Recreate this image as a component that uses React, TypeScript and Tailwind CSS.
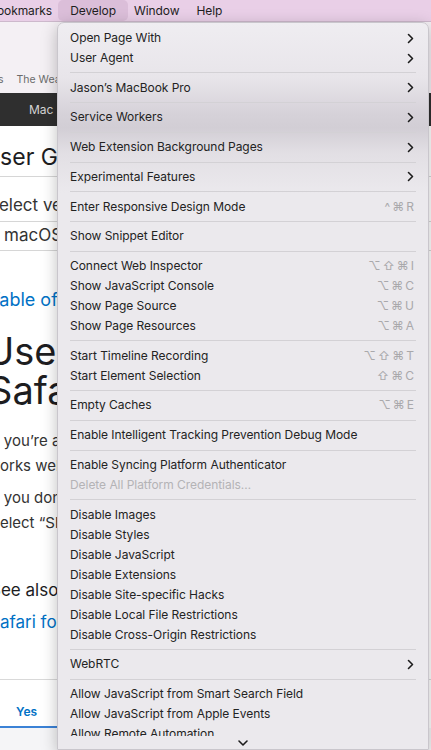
import React from "react";

type Item =
  | { kind: "sep" }
  | { kind: "item"; label: string; shortcut?: string; sub?: boolean; disabled?: boolean };

const items: Item[] = [
  { kind: "item", label: "Open Page With", sub: true },
  { kind: "item", label: "User Agent", sub: true },
  { kind: "sep" },
  { kind: "item", label: "Jason’s MacBook Pro", sub: true },
  { kind: "sep" },
  { kind: "item", label: "Service Workers", sub: true },
  { kind: "sep" },
  { kind: "item", label: "Web Extension Background Pages", sub: true },
  { kind: "sep" },
  { kind: "item", label: "Experimental Features", sub: true },
  { kind: "sep" },
  { kind: "item", label: "Enter Responsive Design Mode", shortcut: "^⌘R" },
  { kind: "sep" },
  { kind: "item", label: "Show Snippet Editor" },
  { kind: "sep" },
  { kind: "item", label: "Connect Web Inspector", shortcut: "⌥⇧⌘I" },
  { kind: "item", label: "Show JavaScript Console", shortcut: "⌥⌘C" },
  { kind: "item", label: "Show Page Source", shortcut: "⌥⌘U" },
  { kind: "item", label: "Show Page Resources", shortcut: "⌥⌘A" },
  { kind: "sep" },
  { kind: "item", label: "Start Timeline Recording", shortcut: "⌥⇧⌘T" },
  { kind: "item", label: "Start Element Selection", shortcut: "⇧⌘C" },
  { kind: "sep" },
  { kind: "item", label: "Empty Caches", shortcut: "⌥⌘E" },
  { kind: "sep" },
  { kind: "item", label: "Enable Intelligent Tracking Prevention Debug Mode" },
  { kind: "sep" },
  { kind: "item", label: "Enable Syncing Platform Authenticator" },
  { kind: "item", label: "Delete All Platform Credentials…", disabled: true },
  { kind: "sep" },
  { kind: "item", label: "Disable Images" },
  { kind: "item", label: "Disable Styles" },
  { kind: "item", label: "Disable JavaScript" },
  { kind: "item", label: "Disable Extensions" },
  { kind: "item", label: "Disable Site-specific Hacks" },
  { kind: "item", label: "Disable Local File Restrictions" },
  { kind: "item", label: "Disable Cross-Origin Restrictions" },
  { kind: "sep" },
  { kind: "item", label: "WebRTC", sub: true },
  { kind: "sep" },
  { kind: "item", label: "Allow JavaScript from Smart Search Field" },
  { kind: "item", label: "Allow JavaScript from Apple Events" },
  { kind: "item", label: "Allow Remote Automation" },
  { kind: "item", label: "Allow Unsigned Extensions" },
];

function Chevron() {
  return (
    <svg width="7" height="11" viewBox="0 0 7 11" fill="none">
      <path d="M1.5 1.5l4 4-4 4" stroke="#1c1c1c" strokeWidth="1.6" strokeLinecap="round" strokeLinejoin="round" />
    </svg>
  );
}

function BackgroundPage() {
  return (
    <div className="flex flex-col w-full font-['Inter',sans-serif]">
      {/* toolbar / favorites */}
      <div className="h-[71px] bg-[#f4f0f4] flex items-end pb-[5px] text-[10.5px] text-[#6b6b6b] whitespace-nowrap">
        <span className="-ml-[2px]">s</span>
        <span className="ml-[13px]">The Weather Channel</span>
      </div>
      {/* dark site nav */}
      <div className="h-[33px] bg-[#2f2f2f] flex items-center pl-[29px] text-[12px] text-[#d4d4d4]">
        Mac
      </div>
      <div className="bg-white flex flex-col text-[#1d1d1f] whitespace-nowrap">
        <div className="h-[51px] flex items-center pt-[12px] text-[23px] -ml-[17px] border-b border-[#d6d6d6]">User Guide</div>
        <div className="h-[45px] flex items-center pt-[14px] text-[17px] text-[#333] -ml-[12px] border-b border-[#d6d6d6]">Select version</div>
        <div className="h-[29px] flex items-center text-[17px] text-[#333] pl-[4px] border-b border-[#d6d6d6]">macOS</div>
        <div className="h-[93px] flex items-center pt-[4px] text-[18px] text-[#0071c5] -ml-[11px]">Table of Contents</div>
        <div className="flex flex-col text-[38px] leading-[39px] -ml-[14px] mt-[-12px]">
          <span>Use</span>
          <span className="ml-[2px]">Safari</span>
        </div>
        <div className="flex flex-col text-[15px] leading-[25px] text-[#333] mt-[18px]">
          <span className="-ml-[10px]">If you’re a</span>
          <span className="-ml-[12px]">works well</span>
        </div>
        <div className="flex flex-col text-[15px] leading-[25px] text-[#333] mt-[7px]">
          <span className="-ml-[10px]">If you don</span>
          <span className="-ml-[8px]">select “Show</span>
        </div>
        <div className="text-[17px] mt-[44px] -ml-[10px] leading-[22px]">See also</div>
        <div className="text-[17px] text-[#0071c5] mt-[10px] -ml-[11px] leading-[22px]">Safari for Mac</div>
        <div className="mt-[46px] border-t border-[#d9d9d9] h-[47px] pt-[25px]">
          <span className="block pl-[16px] text-[12px] leading-[14px] font-semibold text-[#0071c5]">Yes</span>
        </div>
        <div className="h-[2px] bg-[#3b82d6] w-[57px]" />
        <div className="h-[30px] bg-[#f5f5f7]" />
      </div>
    </div>
  );
}

function MenuBar() {
  return (
    <div className="h-[22px] bg-[#e9cfe7] border-b border-[#cdb9cc] flex items-center text-[12px] tracking-[-0.1px] text-[#1e1e1e] font-['Inter',sans-serif] whitespace-nowrap">
      <span className="-ml-[3px]">ookmarks</span>
      <span className="ml-[6px] h-[21px] w-[70px] flex items-center justify-center rounded-[5px] bg-[#dbbed9]">Develop</span>
      <span className="ml-[6px]">Window</span>
      <span className="ml-[17px]">Help</span>
    </div>
  );
}

function DevelopMenu() {
  return (
    <div className="absolute left-[57px] top-[22px] w-[372px] h-[728px] overflow-hidden rounded-t-[7px] border border-[#c9c6cc] shadow-[0_4px_16px_rgba(0,0,0,0.25)] bg-[linear-gradient(to_bottom,#efedf1_0px,#e8e5ea_55px,#d6d2d9_90px,#d2ced5_105px,#e2dfe4_130px,#ebe9ed_170px,#ebe9ed_100%)] font-['Inter',sans-serif] text-[12px] tracking-[-0.05px] text-[#232323]">
      <div className="flex flex-col pt-[5px]">
        {items.map((it, i) =>
          it.kind === "sep" ? (
            <div key={i} className="h-[9.72px] flex items-center px-[12px]">
              <div className="h-px w-full bg-[#d3d1d5]" />
            </div>
          ) : (
            <div key={i} className="h-[20px] flex items-center justify-between pl-[12px] pr-[14px] whitespace-nowrap">
              <span className={it.disabled ? "text-[#b4b3b6]" : ""}>{it.label}</span>
              {it.sub && <Chevron />}
              {it.shortcut && (
                <span className="text-[12px] tracking-[2px] text-[#a9a8ab] -mr-[2px]">{it.shortcut}</span>
              )}
            </div>
          )
        )}
      </div>
      <div className="absolute left-0 right-0 bottom-0 h-[13px] bg-[#ebe9ed] flex justify-center">
        <svg width="12" height="8" viewBox="0 0 12 8" fill="none" className="mt-[3px]">
          <path d="M2 2l4 4 4-4" stroke="#1c1c1c" strokeWidth="1.6" strokeLinecap="round" strokeLinejoin="round" />
        </svg>
      </div>
    </div>
  );
}

export default function App() {
  return (
    <div className="relative w-[431px] h-[750px] overflow-hidden bg-white">
      <MenuBar />
      <BackgroundPage />
      <DevelopMenu />
    </div>
  );
}
